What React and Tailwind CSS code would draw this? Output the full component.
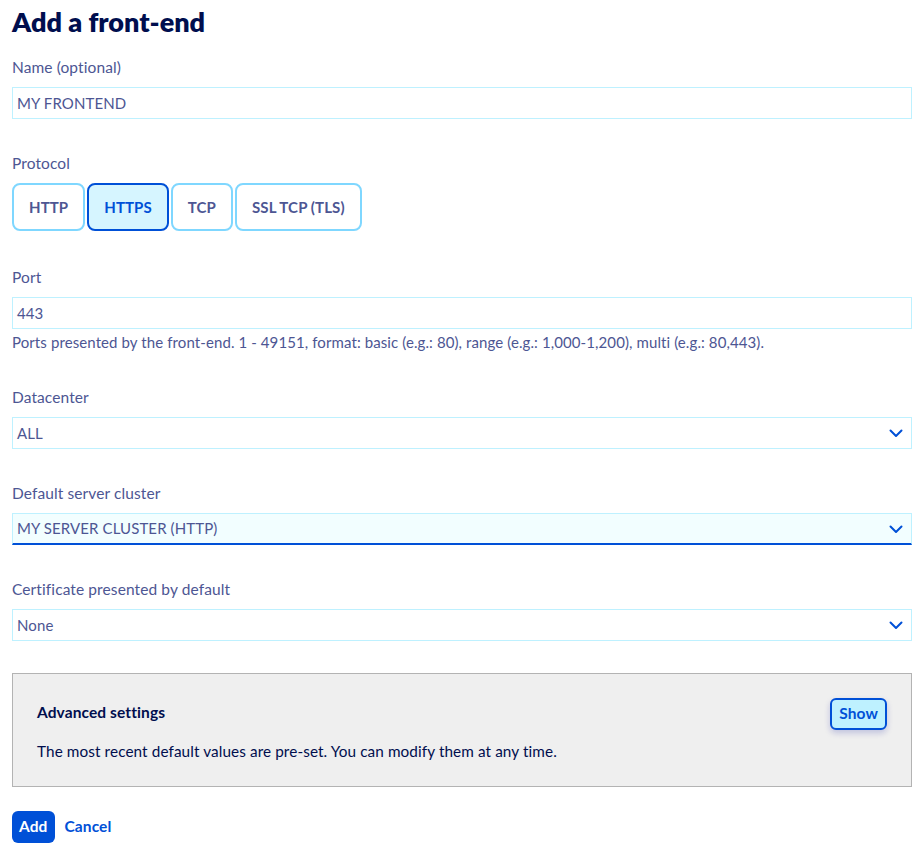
import React, { useState } from 'react';

const Chevron = () => (
  <svg width="16" height="16" viewBox="0 0 16 16" fill="none" className="shrink-0">
    <path d="M2.5 5.5 L8 11 L13.5 5.5" stroke="#0050d7" strokeWidth="2" strokeLinecap="round" strokeLinejoin="round" />
  </svg>
);

function Label({ children }) {
  return <div className="text-[15.5px] leading-5 text-[#4d5693] mb-[10px]">{children}</div>;
}

function TextField({ value }) {
  return (
    <div className="h-8 border border-[#bef1ff] bg-white flex items-center px-1 text-[15px] text-[#4d5693]">
      {value}
    </div>
  );
}

function SelectField({ value, active = false }) {
  return (
    <div
      className={
        active
          ? 'h-8 border border-[#bef1ff] border-b-2 border-b-[#0050d7] bg-[#f2feff] flex items-center justify-between pl-1 pr-[7px] text-[15px] text-[#4d5693]'
          : 'h-8 border border-[#bef1ff] bg-white flex items-center justify-between pl-1 pr-[7px] text-[15px] text-[#4d5693]'
      }
    >
      <span>{value}</span>
      <Chevron />
    </div>
  );
}

export default function App() {
  const [protocol, setProtocol] = useState('HTTPS');
  const protocols = ['HTTP', 'HTTPS', 'TCP', 'SSL TCP (TLS)'];

  return (
    <div className="w-[924px] min-h-[854px] bg-white px-3 pt-[6px] font-['Lato',sans-serif] tracking-[0.1px]">
      <h1 className="text-[27px] leading-8 font-extrabold tracking-normal text-[#000e4e] mb-[19px]">Add a front-end</h1>

      {/* Name */}
      <Label>Name (optional)</Label>
      <TextField value="MY FRONTEND" />

      {/* Protocol */}
      <div className="mt-[34px]">
        <Label>Protocol</Label>
        <div className="flex gap-[2px] mt-[1px]">
          {protocols.map((p) => (
            <button
              key={p}
              onClick={() => setProtocol(p)}
              className={
                p === protocol
                  ? 'h-12 px-[15px] rounded-lg border-2 border-[#0050d7] bg-[#d6f5ff] text-[15px] font-bold text-[#0050d7]'
                  : 'h-12 px-[15px] rounded-lg border-2 border-[#7fd7ff] bg-white text-[15px] font-bold text-[#4d5693]'
              }
            >
              {p}
            </button>
          ))}
        </div>
      </div>

      {/* Port */}
      <div className="mt-[36px]">
        <Label>Port</Label>
        <TextField value="443" />
        <p className="text-[15px] leading-5 text-[#4d5693] mt-[3px]">
          Ports presented by the front-end. 1 - 49151, format: basic (e.g.: 80), range (e.g.: 1,000-1,200), multi (e.g.: 80,443).
        </p>
      </div>

      {/* Datacenter */}
      <div className="mt-[35px]">
        <Label>Datacenter</Label>
        <SelectField value="ALL" />
      </div>

      <div className="mt-[34px]">
        <Label>Default server cluster</Label>
        <SelectField value="MY SERVER CLUSTER (HTTP)" active />
      </div>

      <div className="mt-[34px]">
        <Label>Certificate presented by default</Label>
        <SelectField value="None" />
      </div>

      {/* Advanced settings */}
      <div className="mt-[32px] h-[114px] border border-[#b3b3b3] bg-[#efefef] pl-6 pr-6 flex items-start justify-between">
        <div className="pt-[28px]">
          <div className="text-[15.5px] leading-5 font-bold text-[#000e4e]">Advanced settings</div>
          <div className="text-[15.3px] leading-5 text-[#000e4e] mt-[19px]">
            The most recent default values are pre-set. You can modify them at any time.
          </div>
        </div>
        <button className="mt-6 h-8 px-[7px] rounded-md border-2 border-[#0050d7] bg-[#bef1ff] text-[15.5px] font-bold text-[#0050d7] shadow-[0_3px_6px_rgba(0,14,156,0.2)]">
          Show
        </button>
      </div>

      {/* Actions */}
      <div className="mt-6 flex items-center gap-[10px]">
        <button className="h-8 px-[7px] rounded-md bg-[#0050d7] text-white text-[15.5px] font-bold">Add</button>
        <button className="text-[15.5px] font-bold text-[#0050d7]">Cancel</button>
      </div>
    </div>
  );
}
